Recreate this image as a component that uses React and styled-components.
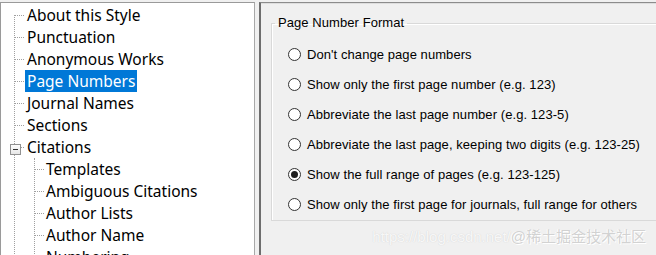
import React from "react"
import styled, { createGlobalStyle } from "styled-components"

const GlobalStyle = createGlobalStyle`
  html, body {
    margin: 0;
    padding: 0;
    background: #f0f0f0;
    overflow: hidden;
  }
`

const Window = styled.div`
  position: relative;
  display: flex;
  gap: 4px;
  height: 255px;
  width: 656px;
  overflow: hidden;
`

const TreePane = styled.div`
  width: 255px;
  margin-top: 2px;
  background: #fff;
  border-top: 1px solid #9a9a9a;
  border-left: 1px solid #9a9a9a;
  border-right: 1px solid #a8a8a8;
  box-sizing: border-box;
  padding-top: 1px;
  overflow: hidden;
`

const TreeList = styled.ul`
  position: relative;
  list-style: none;
  margin: 0;
  padding: 0;

  &::before {
    content: "";
    position: absolute;
    left: ${p => (p.$nested ? 33 : 13)}px;
    top: ${p => (p.$nested ? 0 : 11)}px;
    bottom: 0;
    border-left: 1px dotted #a0a0a0;
  }
`

const Row = styled.li`
  position: relative;
  height: 22px;
  display: flex;
  align-items: center;
  padding-left: ${p => (p.$level ? 43 : 24)}px;

  &::after {
    content: "";
    position: absolute;
    left: ${p => (p.$level ? 34 : 14)}px;
    width: 9px;
    top: 11px;
    border-top: 1px dotted #a0a0a0;
  }
`

const Label = styled.span`
  height: 22px;
  line-height: 22px;
  padding: 0 2px;
  font-family: "Noto Sans", "Open Sans", sans-serif;
  font-size: 15.5px;
  color: ${p => (p.$selected ? "#fff" : "#000")};
  background: ${p => (p.$selected ? "#0078d7" : "transparent")};
  white-space: nowrap;
`

const Expander = styled.span`
  position: absolute;
  z-index: 1;
  left: 9px;
  top: 8px;
  width: 9px;
  height: 9px;
  border: 1px solid #919191;
  background: linear-gradient(#fff, #e6e6e6);

  &::before {
    content: "";
    position: absolute;
    left: 2px;
    right: 2px;
    top: 4px;
    border-top: 1px solid #333;
  }
`

const SettingsPane = styled.div`
  flex: 1;
  margin-top: 2px;
  border-top: 1px solid #8c8c8c;
  border-left: 2px solid #6d6d6d;
  box-shadow: inset 0 1px 0 #dedede;
  background: #f0f0f0;
  overflow: hidden;
`

const GroupBox = styled.fieldset`
  margin: 12px 0 0 10px;
  width: 420px;
  height: 206px;
  box-sizing: border-box;
  padding: 8px 0 0 16px;
  border: 1px solid #d9d9d9;
  border-radius: 0;
  box-shadow: inset 1px 1px 0 #fff;
  font-family: Tahoma, "Liberation Sans", sans-serif;
  font-size: 13px;
  letter-spacing: 0.07px;
  color: #000;
`

const Legend = styled.legend`
  padding: 0 3px;
  margin-left: -13px;
  line-height: 16px;
`

const Options = styled.div`
  display: flex;
  flex-direction: column;
`

const Option = styled.label`
  display: flex;
  align-items: center;
  gap: 6px;
  height: 30px;
  white-space: nowrap;
`

const RadioDot = styled.span`
  position: relative;
  width: 11px;
  height: 11px;
  border: 1px solid #333;
  border-radius: 50%;
  background: #fff;
  flex: none;

  &::after {
    content: "";
    display: ${p => (p.$checked ? "block" : "none")};
    position: absolute;
    left: 2px;
    top: 2px;
    width: 7px;
    height: 7px;
    border-radius: 50%;
    background: #1e1e1e;
  }
`

const Watermark = styled.div`
  position: absolute;
  right: 10px;
  bottom: 9px;
  font-family: "Liberation Sans", "Noto Sans CJK SC", sans-serif;
  font-size: 15px;
  white-space: nowrap;
  color: rgba(255, 255, 255, 0.85);
  text-shadow: 0 0 1px rgba(120, 120, 120, 0.3);

  span {
    color: #d2d2d2;
    text-shadow: 1px 1px 0 #fff, -1px 0 0 #fff;
  }
`

const topItems = [
  "About this Style",
  "Punctuation",
  "Anonymous Works",
  "Page Numbers",
  "Journal Names",
  "Sections",
]

const citationItems = [
  "Templates",
  "Ambiguous Citations",
  "Author Lists",
  "Author Name",
  "Numbering",
]

const formats = [
  "Don't change page numbers",
  "Show only the first page number (e.g. 123)",
  "Abbreviate the last page number (e.g. 123-5)",
  "Abbreviate the last page, keeping two digits (e.g. 123-25)",
  "Show the full range of pages (e.g. 123-125)",
  "Show only the first page for journals, full range for others",
]

const App = () => {
  const selected = 4

  return (
    <>
      <GlobalStyle />
      <Window>
        <TreePane>
          <TreeList>
            {topItems.map(item => (
              <Row key={item}>
                <Label $selected={item === "Page Numbers"}>{item}</Label>
              </Row>
            ))}
            <Row>
              <Expander />
              <Label>Citations</Label>
            </Row>
            <li>
              <TreeList $nested>
                {citationItems.map(item => (
                  <Row key={item} $level={1}>
                    <Label>{item}</Label>
                  </Row>
                ))}
              </TreeList>
            </li>
          </TreeList>
        </TreePane>
        <SettingsPane>
          <GroupBox>
            <Legend>Page Number Format</Legend>
            <Options>
              {formats.map((text, i) => (
                <Option key={text}>
                  <RadioDot $checked={i === selected} />
                  {text}
                </Option>
              ))}
            </Options>
          </GroupBox>
        </SettingsPane>
        <Watermark>
          https://blog.csdn.net/<span>@稀土掘金技术社区</span>
        </Watermark>
      </Window>
    </>
  )
}

export default App
